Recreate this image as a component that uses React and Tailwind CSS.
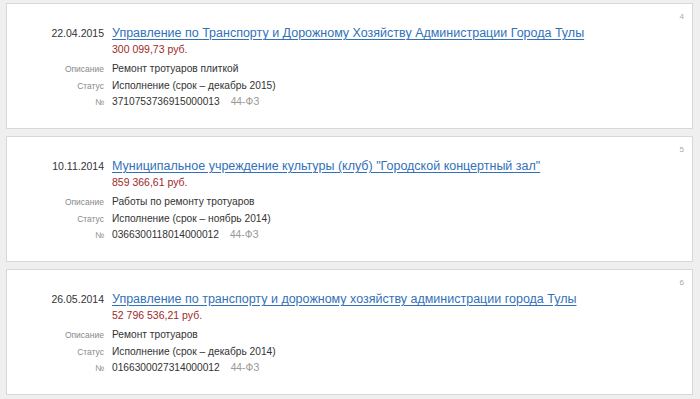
const contracts = [
  {
    n: 4,
    date: '22.04.2015',
    customer: 'Управление по Транспорту и Дорожному Хозяйству Администрации Города Тулы',
    price: '300 099,73 руб.',
    description: 'Ремонт тротуаров плиткой',
    status: 'Исполнение (срок – декабрь 2015)',
    number: '3710753736915000013',
    law: '44-ФЗ',
  },
  {
    n: 5,
    date: '10.11.2014',
    customer: 'Муниципальное учреждение культуры (клуб) "Городской концертный зал"',
    price: '859 366,61 руб.',
    description: 'Работы по ремонту тротуаров',
    status: 'Исполнение (срок – ноябрь 2014)',
    number: '0366300118014000012',
    law: '44-ФЗ',
  },
  {
    n: 6,
    date: '26.05.2014',
    customer: 'Управление по транспорту и дорожному хозяйству администрации города Тулы',
    price: '52 796 536,21 руб.',
    description: 'Ремонт тротуаров',
    status: 'Исполнение (срок – декабрь 2014)',
    number: '0166300027314000012',
    law: '44-ФЗ',
  },
];

function Row({ label, children }) {
  return (
    <div className="flex items-baseline leading-[15.5px]">
      <div className="w-[97px] shrink-0 text-right text-[8.5px] text-[#8a8a8a]">{label}</div>
      <div className="pl-[8px] text-[10.2px] text-[#333]">{children}</div>
    </div>
  );
}

function ContractCard({ c }) {
  return (
    <div className="relative h-[126px] bg-white border border-[#d8d8d8] pt-[21px]">
      <span className="absolute top-[7px] right-[8px] text-[8px] text-[#aaa]">{c.n}</span>
      <div className="flex items-baseline leading-4">
        <div className="w-[97px] shrink-0 text-right text-[10.5px] text-[#333]">{c.date}</div>
        <a href="#" className="pl-[8px] text-[12.5px] text-[#3271b9] underline underline-offset-2">
          {c.customer}
        </a>
      </div>
      <div className="pl-[105px] leading-4 text-[10.5px] text-[#9e2a2b]">{c.price}</div>
      <div className="mt-[4px]">
        <Row label="Описание">{c.description}</Row>
        <Row label="Статус">{c.status}</Row>
        <Row label="№">
          {c.number}
          <span className="ml-[11px] text-[#999]">{c.law}</span>
        </Row>
      </div>
    </div>
  );
}

export default function App() {
  return (
    <div
      className="min-h-[399px] bg-[#efefef] pt-[3px] pl-[6px] pr-[7px] flex flex-col gap-[7px]"
      style={{ fontFamily: '"Liberation Sans", Arial, sans-serif' }}
    >
      {contracts.map((c) => (
        <ContractCard key={c.n} c={c} />
      ))}
    </div>
  );
}
